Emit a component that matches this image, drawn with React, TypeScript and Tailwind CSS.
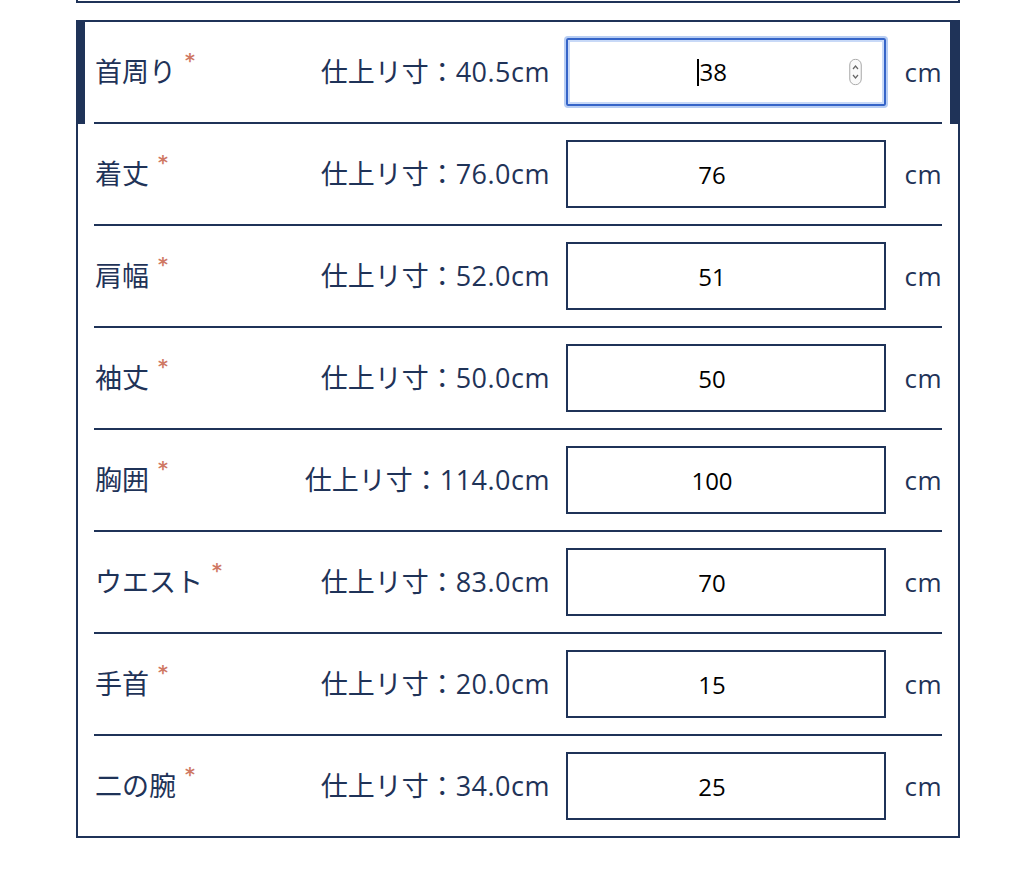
import React from "react";

const rows = [
  { label: "首周り", size: "40.5", value: "38" },
  { label: "着丈", size: "76.0", value: "76" },
  { label: "肩幅", size: "52.0", value: "51" },
  { label: "袖丈", size: "50.0", value: "50" },
  { label: "胸囲", size: "114.0", value: "100" },
  { label: "ウエスト", size: "83.0", value: "70" },
  { label: "手首", size: "20.0", value: "15" },
  { label: "二の腕", size: "34.0", value: "25" },
];

const font = { fontFamily: '"Open Sans", "Noto Sans CJK JP", sans-serif' };

const SpinIcon = () => (
  <svg width="13" height="27" viewBox="0 0 13 27" className="absolute right-[22px] top-1/2 -translate-y-1/2">
    <rect x="0.75" y="0.75" width="11.5" height="25.5" rx="5.75" fill="#fafafa" stroke="#a8a8a8" strokeWidth="1" />
    <path d="M4 10.5 L6.5 7.5 L9 10.5" fill="none" stroke="#666" strokeWidth="1.2" />
    <path d="M4 16.5 L6.5 19.5 L9 16.5" fill="none" stroke="#666" strokeWidth="1.2" />
  </svg>
);

const App = () => {
  return (
    <div className="min-h-[870px] w-full bg-white pl-[76px] pr-[65px] text-[#1f3358]" style={font}>
      {/* tail of the previous box */}
      <div className="h-[3px] border-x-2 border-b-2 border-[#1f3358]" />

      <div className="mt-[17px] flex flex-col border-y-2 border-[#1f3358]">
        {rows.map((row, i) => {
          const active = i === 0;
          const last = i === rows.length - 1;
          return (
            <div
              key={row.label}
              className={
                active
                  ? "border-l-[9px] border-r-[10px] border-[#1f3358] pl-[9px] pr-[8px]"
                  : "border-x-2 border-[#1f3358] px-[16px]"
              }
            >
              <div className={last ? "flex h-[100px] items-center" : "flex h-[102px] items-center border-b-2 border-[#1f3358]"}>
                <div className="flex flex-1 items-start pl-[1px]">
                  <span className="text-[27px]">{row.label}</span>
                  <span
                    className="ml-[9px] -mt-[1px] text-[19px] font-bold leading-none text-[#cf7864]"
                    style={{ fontFamily: '"DejaVu Sans", sans-serif' }}
                  >
                    *
                  </span>
                </div>
                <div className="text-[27px]">
                  仕上リ寸：<span className="tracking-[0.5px]">{row.size}cm</span>
                </div>
                <div className="ml-[16px] flex">
                  {active ? (
                    <div className="relative flex h-[68px] w-[320px] items-center justify-center rounded-[2px] border-2 border-[#3564c8] pr-[28px] text-[24px] text-black shadow-[0_0_0_2px_#b7cdf3,inset_0_0_0_2px_#c8d9f7]">
                      <span className="mr-[1px] inline-block h-[27px] w-[1.5px] bg-black" />
                      <span>{row.value}</span>
                      <SpinIcon />
                    </div>
                  ) : (
                    <input
                      readOnly
                      value={row.value}
                      className="h-[68px] w-[320px] border-2 border-[#1f3358] bg-white pr-[28px] text-center text-[24px] text-black outline-none"
                      style={font}
                    />
                  )}
                </div>
                <div className="w-[56px] text-right text-[26px] tracking-[0.5px]">cm</div>
              </div>
            </div>
          );
        })}
      </div>
    </div>
  );
};

export default App;
